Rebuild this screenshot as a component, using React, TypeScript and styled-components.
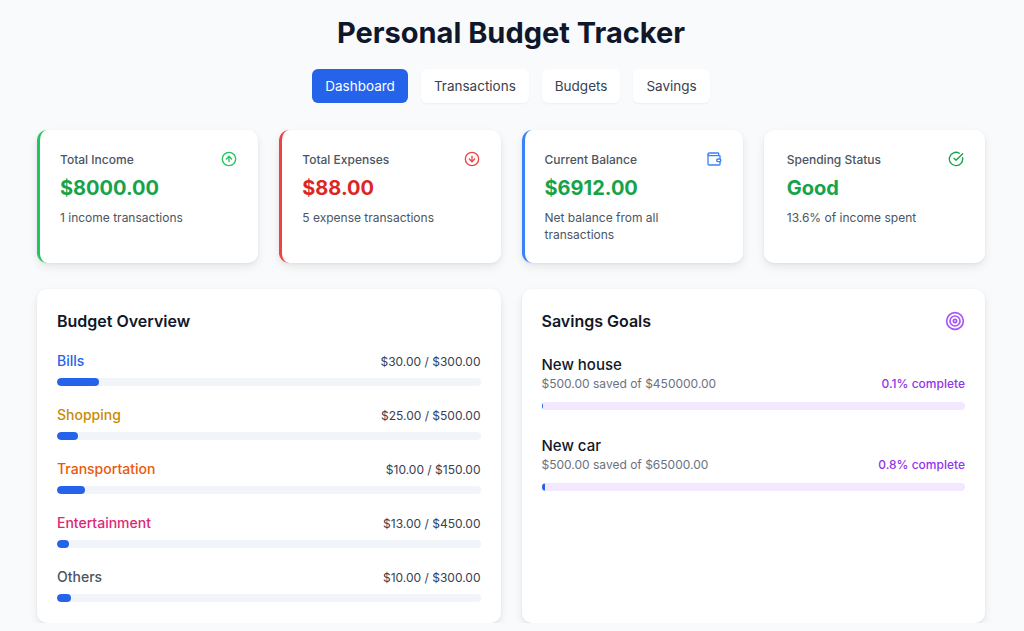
import React from "react";
import styled, { createGlobalStyle } from "styled-components";

const Global = createGlobalStyle`
  body { margin: 0; background: #f8fafc; font-family: Inter, "Noto Sans", sans-serif; color: #111827; }
`;

const Page = styled.div`
  width: 948px; margin: 0 auto; padding-top: 16px; position: relative; left: -1px;
`;
const Title = styled.h1`
  margin: 0; text-align: center; font-size: 29px; font-weight: 700; line-height: 34px; color: #0f172a;
`;
const Tabs = styled.div`
  display: flex; justify-content: center; gap: 13px; margin-top: 19px;
`;
const Tab = styled.button<{ $active?: boolean }>`
  font-family: inherit; font-size: 13.5px; border: none; border-radius: 6px; height: 34px; padding: 0 13px;
  background: ${p => (p.$active ? "#2563eb" : "#fff")};
  color: ${p => (p.$active ? "#fff" : "#374151")};
  box-shadow: ${p => (p.$active ? "none" : "0 1px 2px rgba(0,0,0,0.05)")};
`;
const Stats = styled.div`
  display: grid; grid-template-columns: repeat(4, 1fr); gap: 21px; margin-top: 27px;
`;
const StatCard = styled.div<{ $accent?: string }>`
  background: #fff; border-radius: 10px; height: 133px; box-sizing: border-box; padding: 21px 21px 0 20px;
  border-left: 3px solid ${p => p.$accent || "transparent"};
  box-shadow: 0 4px 10px rgba(0,0,0,0.08), 0 1px 3px rgba(0,0,0,0.05);
`;
const StatHead = styled.div`
  display: flex; justify-content: space-between; align-items: center; font-size: 12px; color: #4b5563; font-weight: 500;
`;
const StatValue = styled.div<{ $color: string }>`
  font-size: 20px; font-weight: 700; color: ${p => p.$color}; margin-top: 9px; line-height: 24px;
`;
const StatSub = styled.div<{ $narrow?: boolean }>`
  font-size: 12px; color: #4b5563; margin-top: 9px; line-height: 17px; max-width: ${p => (p.$narrow ? "130px" : "none")};
`;
const Panels = styled.div`
  display: grid; grid-template-columns: 1fr 1fr; gap: 21px; margin-top: 26px;
`;
const Panel = styled.div`
  background: #fff; border-radius: 10px; padding: 21px 20px 18px; height: 334px; box-sizing: border-box;
  box-shadow: 0 4px 10px rgba(0,0,0,0.08), 0 1px 3px rgba(0,0,0,0.05);
`;
const PanelHead = styled.div`
  display: flex; justify-content: space-between; align-items: center; font-size: 16px; font-weight: 600; height: 22px;
`;
const BudgetList = styled.div`
  display: flex; flex-direction: column; gap: 20px; margin-top: 20px;
`;
const Row = styled.div`
  display: flex; justify-content: space-between; align-items: baseline;
`;
const Cat = styled.span<{ $color: string }>`
  font-size: 14px; font-weight: 500; color: ${p => p.$color};
`;
const Amt = styled.span`
  font-size: 12px; color: #374151;
`;
const Track = styled.div<{ $bg: string; $gap?: number }>`
  height: 8px; border-radius: 4px; background: ${p => p.$bg}; margin-top: ${p => p.$gap ?? 9}px; overflow: hidden;
`;
const Fill = styled.div`
  height: 100%; background: #2563eb; border-radius: 4px;
`;
const Goals = styled.div`
  display: flex; flex-direction: column; gap: 26px; margin-top: 23px;
`;
const GoalName = styled.div`
  font-size: 15px; font-weight: 500; color: #111827; margin-bottom: 2px;
`;
const GoalSaved = styled.span`
  font-size: 12px; color: #6b7280;
`;
const GoalPct = styled.span`
  font-size: 12px; color: #9333ea; font-weight: 500;
`;

const budgets = [
  { name: "Bills", color: "#2563eb", spent: 30, total: 300 },
  { name: "Shopping", color: "#ca8a04", spent: 25, total: 500 },
  { name: "Transportation", color: "#ea580c", spent: 10, total: 150 },
  { name: "Entertainment", color: "#db2777", spent: 13, total: 450 },
  { name: "Others", color: "#4b5563", spent: 10, total: 300 },
];
const goals = [
  { name: "New house", saved: 500, target: 450000, pct: "0.1" },
  { name: "New car", saved: 500, target: 65000, pct: "0.8" },
];

const Ico = ({ children, color }: { children: React.ReactNode; color: string }) => (
  <svg width="16" height="16" viewBox="0 0 24 24" fill="none" stroke={color} strokeWidth="2" strokeLinecap="round" strokeLinejoin="round">{children}</svg>
);

export default function App() {
  return (
    <>
      <Global />
      <Page>
        <Title>Personal Budget Tracker</Title>
        <Tabs>
          <Tab $active>Dashboard</Tab>
          <Tab>Transactions</Tab>
          <Tab>Budgets</Tab>
          <Tab>Savings</Tab>
        </Tabs>
        <Stats>
          <StatCard $accent="#22c55e">
            <StatHead>Total Income<Ico color="#22c55e"><circle cx="12" cy="12" r="10" /><path d="m16 12-4-4-4 4" /><path d="M12 16V8" /></Ico></StatHead>
            <StatValue $color="#16a34a">$8000.00</StatValue>
            <StatSub>1 income transactions</StatSub>
          </StatCard>
          <StatCard $accent="#ef4444">
            <StatHead>Total Expenses<Ico color="#ef4444"><circle cx="12" cy="12" r="10" /><path d="M12 8v8" /><path d="m8 12 4 4 4-4" /></Ico></StatHead>
            <StatValue $color="#dc2626">$88.00</StatValue>
            <StatSub>5 expense transactions</StatSub>
          </StatCard>
          <StatCard $accent="#3b82f6">
            <StatHead>Current Balance<Ico color="#3b82f6"><path d="M19 7V4a1 1 0 0 0-1-1H5a2 2 0 0 0 0 4h15a1 1 0 0 1 1 1v4h-3a2 2 0 0 0 0 4h3a1 1 0 0 0 1-1v-2a1 1 0 0 0-1-1" /><path d="M3 5v14a2 2 0 0 0 2 2h15a1 1 0 0 0 1-1v-4" /></Ico></StatHead>
            <StatValue $color="#16a34a">$6912.00</StatValue>
            <StatSub $narrow>Net balance from all transactions</StatSub>
          </StatCard>
          <StatCard>
            <StatHead>Spending Status<Ico color="#16a34a"><path d="M21.801 10A10 10 0 1 1 17 3.335" /><path d="m9 11 3 3L22 4" /></Ico></StatHead>
            <StatValue $color="#16a34a">Good</StatValue>
            <StatSub>13.6% of income spent</StatSub>
          </StatCard>
        </Stats>
        <Panels>
          <Panel>
            <PanelHead>Budget Overview</PanelHead>
            <BudgetList>
              {budgets.map(b => (
                <div key={b.name}>
                  <Row><Cat $color={b.color}>{b.name}</Cat><Amt>${b.spent.toFixed(2)} / ${b.total.toFixed(2)}</Amt></Row>
                  <Track $bg="#f1f5f9"><Fill style={{ width: `${(b.spent / b.total) * 100}%` }} /></Track>
                </div>
              ))}
            </BudgetList>
          </Panel>
          <Panel>
            <PanelHead>Savings Goals
              <svg width="20" height="20" viewBox="0 0 24 24" fill="none" stroke="#a855f7" strokeWidth="2"><circle cx="12" cy="12" r="10" /><circle cx="12" cy="12" r="6" /><circle cx="12" cy="12" r="2" /></svg>
            </PanelHead>
            <Goals>
              {goals.map(g => (
                <div key={g.name}>
                  <GoalName>{g.name}</GoalName>
                  <Row><GoalSaved>${g.saved.toFixed(2)} saved of ${g.target.toFixed(2)}</GoalSaved><GoalPct>{g.pct}% complete</GoalPct></Row>
                  <Track $bg="#f3e8ff" $gap={11}><Fill style={{ width: `${Math.max(0.3, (g.saved / g.target) * 100)}%` }} /></Track>
                </div>
              ))}
            </Goals>
          </Panel>
        </Panels>
      </Page>
    </>
  );
}
